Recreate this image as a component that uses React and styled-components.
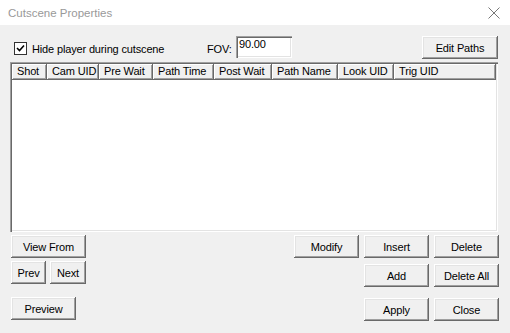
import styled, { createGlobalStyle } from "styled-components";

const Global = createGlobalStyle`
  html, body { margin: 0; padding: 0; background: #f0f0f0; }
  body { font-family: "Liberation Sans", Arial, sans-serif; }
`;

const Window = styled.div`
  width: 510px;
  height: 333px;
  background: #f0f0f0;
  display: flex;
  flex-direction: column;
  font-size: 11px;
  letter-spacing: -0.15px;
  color: #000;
  overflow: hidden;
`;

const TitleBar = styled.div`
  height: 25px;
  background: #fff;
  display: flex;
  align-items: center;
  justify-content: space-between;
  padding: 0 10px 0 8px;
  color: #999;
  font-size: 11.5px;
  letter-spacing: 0;
`;

const Body = styled.div`
  display: flex;
  flex-direction: column;
  padding: 10px 12px 0 10px;
`;

const TopRow = styled.div`
  display: flex;
  align-items: center;
  height: 25px;
  padding-left: 4px;
`;

const CheckLabel = styled.label`
  display: flex;
  align-items: center;
  gap: 5px;
  width: 193px;
  padding-top: 2px;
`;

const CheckBox = styled.span`
  width: 13px;
  height: 13px;
  box-sizing: border-box;
  background: #fff;
  border: 1px solid #333;
  display: flex;
  align-items: center;
  justify-content: center;
`;

const FovLabel = styled.span`
  width: 29px;
  padding-top: 2px;
`;

const Field = styled.div`
  width: 56px;
  height: 22px;
  box-sizing: border-box;
  background: #fff;
  box-shadow: inset 1px 1px #a0a0a0, inset 2px 2px #696969, inset -1px -1px #fff, inset -2px -2px #e3e3e3;
  padding: 2px 3px;
  margin-top: -2px;
`;

const Button = styled.button`
  width: ${({ w }) => w || 65}px;
  height: ${({ h }) => h || 23}px;
  margin: 0;
  padding: 0;
  border: none;
  background: #f0f0f0;
  font: inherit;
  letter-spacing: inherit;
  color: #000;
  box-shadow: inset -1px -1px #696969, inset 1px 1px #fff, inset -2px -2px #a0a0a0, inset 2px 2px #e3e3e3;
  margin-left: ${({ ml }) => ml || 0}px;
  margin-top: ${({ mt }) => mt || 0}px;
`;

const Spacer = styled.div`
  flex: 1;
`;

const List = styled.div`
  margin-top: 2px;
  height: 170px;
  background: #fff;
  box-sizing: border-box;
  padding: 2px 2px;
  box-shadow: inset 1px 1px #a0a0a0, inset 2px 2px #696969, inset -1px -1px #fff, inset -2px -2px #e3e3e3;
`;

const Header = styled.div`
  display: flex;
  height: 16px;
`;

const HeadCell = styled.div`
  width: ${({ w }) => w}px;
  flex: ${({ grow }) => (grow ? 1 : "none")};
  box-sizing: border-box;
  background: #f0f0f0;
  padding: 1px 0 0 5px;
  white-space: nowrap;
  overflow: hidden;
  box-shadow: inset -1px -1px #696969, inset 1px 1px #fff, inset -2px -2px #a0a0a0;
`;

const Bottom = styled.div`
  display: flex;
  justify-content: space-between;
  padding: 3px 11px 0 11px;
`;

const LeftCol = styled.div`
  display: flex;
  flex-direction: column;
  align-items: flex-start;
`;

const PairRow = styled.div`
  display: flex;
  gap: 4px;
  margin-top: 3px;
`;

const RightGrid = styled.div`
  display: grid;
  grid-template-columns: 65px 65px 65px;
  grid-template-rows: 23px 23px 23px;
  column-gap: 5px;
  row-gap: 5px;
  align-content: start;
`;

const Cell = styled.div`
  grid-column: ${({ col }) => col};
  grid-row: ${({ row }) => row};
  margin-top: ${({ mt }) => mt || 0}px;
`;

const columns = [
  ["Shot", 35],
  ["Cam UID", 52],
  ["Pre Wait", 54],
  ["Path Time", 61],
  ["Post Wait", 58],
  ["Path Name", 66],
  ["Look UID", 56],
];

export default function App() {
  return (
    <Window>
      <Global />
      <TitleBar>
        <span>Cutscene Properties</span>
        <svg width="12" height="12" viewBox="0 0 12 12">
          <path d="M0.5 0.5 L11.5 11.5 M11.5 0.5 L0.5 11.5" stroke="#777" strokeWidth="1" />
        </svg>
      </TitleBar>
      <Body>
        <TopRow>
          <CheckLabel>
            <CheckBox>
              <svg width="9" height="9" viewBox="0 0 9 9">
                <path d="M1 4 L3.5 6.5 L8 1.5" stroke="#000" strokeWidth="1.6" fill="none" />
              </svg>
            </CheckBox>
            Hide player during cutscene
          </CheckLabel>
          <FovLabel>FOV:</FovLabel>
          <Field>90.00</Field>
          <Spacer />
          <Button w={76}>Edit Paths</Button>
        </TopRow>
        <List>
          <Header>
            {columns.map(([label, w]) => (
              <HeadCell key={label} w={w}>{label}</HeadCell>
            ))}
            <HeadCell grow>Trig UID</HeadCell>
          </Header>
        </List>
      </Body>
      <Bottom>
        <LeftCol>
          <Button w={75}>View From</Button>
          <PairRow>
            <Button w={35}>Prev</Button>
            <Button w={36}>Next</Button>
          </PairRow>
          <Button w={65} mt={13}>Preview</Button>
        </LeftCol>
        <RightGrid>
          <Cell col={1} row={1}><Button>Modify</Button></Cell>
          <Cell col={2} row={1}><Button>Insert</Button></Cell>
          <Cell col={3} row={1}><Button>Delete</Button></Cell>
          <Cell col={2} row={2} mt={1}><Button>Add</Button></Cell>
          <Cell col={3} row={2} mt={1}><Button>Delete All</Button></Cell>
          <Cell col={2} row={3} mt={7}><Button>Apply</Button></Cell>
          <Cell col={3} row={3} mt={7}><Button>Close</Button></Cell>
        </RightGrid>
      </Bottom>
    </Window>
  );
}
